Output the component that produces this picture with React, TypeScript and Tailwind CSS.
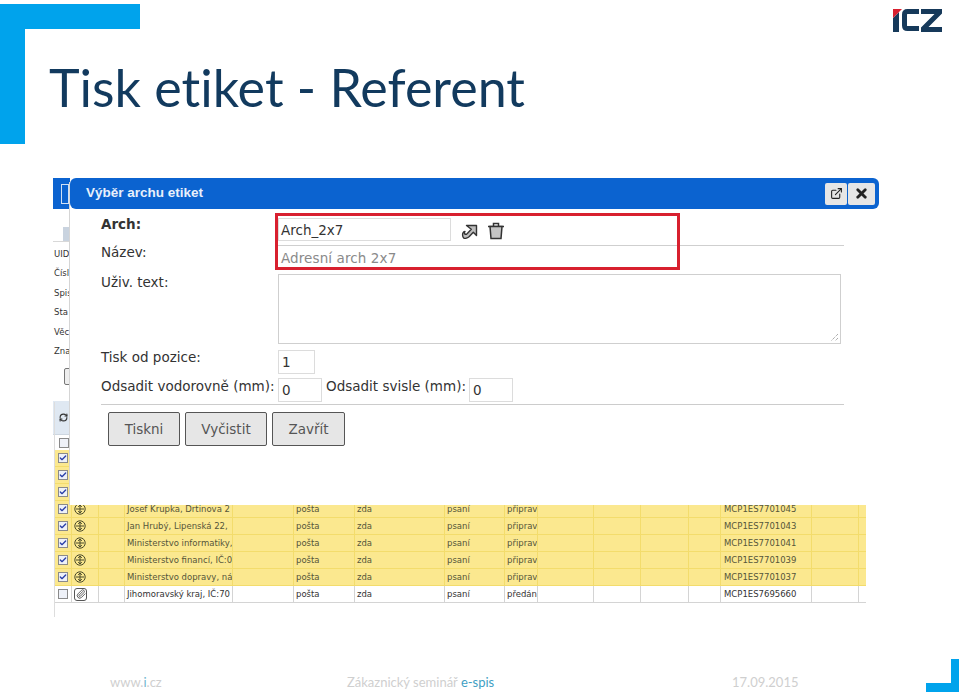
import { Check, ExternalLink, Paperclip, RefreshCw, X } from "lucide-react";

const ROWS = [
  { name: "", code: "MCP1ES7701051", state: "připrav", on: true },
  { name: "", code: "MCP1ES7701049", state: "připrav", on: true },
  { name: "", code: "MCP1ES7701047", state: "připrav", on: true },
  { name: "Josef Krupka, Drtinova 2", code: "MCP1ES7701045", state: "připrav", on: true },
  { name: "Jan Hrubý, Lipenská 22,", code: "MCP1ES7701043", state: "připrav", on: true },
  { name: "Ministerstvo informatiky,", code: "MCP1ES7701041", state: "připrav", on: true },
  { name: "Ministerstvo financí, IČ:0", code: "MCP1ES7701039", state: "připrav", on: true },
  { name: "Ministerstvo dopravy, ná", code: "MCP1ES7701037", state: "připrav", on: true },
  { name: "Jihomoravský kraj, IČ:70", code: "MCP1ES7695660", state: "předán", on: false },
];

const LEFT_LABELS = ["UID", "Čísl", "Spis", "Sta", "Věc", "Zna"];

function Checkbox({ on }: { on: boolean }) {
  return (
    <span className="flex h-[10px] w-[10px] items-center justify-center border border-[#8a8a8a] bg-[#eef1f8]">
      {on && <Check className="h-[8px] w-[8px] text-[#2a3fa8]" strokeWidth={4} />}
    </span>
  );
}

function SendIcon() {
  return (
    <svg viewBox="0 0 12 12" className="h-[12px] w-[12px]">
      <circle cx="6" cy="6" r="5.2" fill="none" stroke="#4a4a2a" strokeWidth="1" />
      <path d="M2 6h8M6 2v8M4.2 4l1.8-2 1.8 2M4.2 8l1.8 2 1.8-2" fill="none" stroke="#4a4a2a" strokeWidth="1" />
    </svg>
  );
}

function Cell({ children, className = "" }: { children?: React.ReactNode; className?: string }) {
  return <div className={`overflow-hidden whitespace-nowrap border-r pl-[2px] ${className}`}>{children}</div>;
}

function TableRow({ row }: { row: (typeof ROWS)[number] }) {
  const line = row.on ? "border-[#f3dc6c]" : "border-[#d4d4d4]";
  return (
    <div
      className={`grid h-[17px] grid-cols-[18px_27px_26px_108px_61px_61px_90px_60px_33px_56px_47px_48px_32px_91px_47px_7px] items-stretch border-b text-[8.5px] leading-[17px] ${line} ${
        row.on ? "bg-[#fbe88f] text-[#55553a]" : "bg-white text-[#333333]"
      }`}
    >
      <div className={`flex items-center justify-center border-r ${line}`}>
        <Checkbox on={row.on} />
      </div>
      <div className={`flex items-center border-r pl-[2px] ${line}`}>
        {row.on ? (
          <SendIcon />
        ) : (
          <span className="flex h-[13px] w-[13px] items-center justify-center rounded-[3px] border border-[#555555]">
            <Paperclip className="h-[10px] w-[10px] text-[#444444]" />
          </span>
        )}
      </div>
      <Cell className={line} />
      <Cell className={line}>{row.name}</Cell>
      <Cell className={line} />
      <Cell className={line}>pošta</Cell>
      <Cell className={line}>zda</Cell>
      <Cell className={line}>psaní</Cell>
      <Cell className={line}>{row.state}</Cell>
      <Cell className={line} />
      <Cell className={line} />
      <Cell className={line} />
      <Cell className={line} />
      <Cell className={`pl-[3px] ${line}`}>{row.code}</Cell>
      <Cell className={line} />
      <div />
    </div>
  );
}

function Field({ className = "", children }: { className?: string; children?: React.ReactNode }) {
  return (
    <div className={`flex items-center border border-[#dcdcdc] bg-white pl-[2px] text-[13.5px] text-[#333333] ${className}`}>
      {children}
    </div>
  );
}

function DialogButton({ label, className }: { label: string; className: string }) {
  return (
    <button className={`h-[34px] rounded-[2px] border border-[#555555] bg-[#e6e6e6] text-[13.5px] text-[#555555] ${className}`}>
      {label}
    </button>
  );
}

function Dialog() {
  return (
    <div className="absolute left-[17px] top-0 h-[327px] w-[814px] bg-white">
      <div className="absolute left-[-1px] top-[4px] h-[323px] w-px bg-[#d5d5d5]" />
      <div className="flex h-[31px] w-[809px] items-center rounded-[6px] bg-[#0b63d0] pl-[16px] pr-[4px]">
        <span className="flex-1 font-['Liberation_Sans',sans-serif] text-[13.5px] font-bold text-[#e8f0fb]">Výběr archu etiket</span>
        <button className="flex h-[22px] w-[22px] items-center justify-center rounded-[2px] bg-[#e6e6e6]">
          <ExternalLink className="h-[13px] w-[13px] text-[#222222]" strokeWidth={2} />
        </button>
        <button className="ml-px flex h-[22px] w-[27px] items-center justify-center rounded-[2px] bg-[#e6e6e6]">
          <X className="h-[15px] w-[15px] text-[#222222]" strokeWidth={4.5} />
        </button>
      </div>

      <div className="relative w-[774px] pl-[31px] text-[13.5px] leading-[16px] text-[#333333]">
        <div className="absolute left-[205px] top-[4px] h-[57px] w-[405px] border-[3px] border-[#d8202f]" />

        <div className="flex h-[36px] pt-[9px]">
          <span className="mt-[-2px] w-[177px] font-bold">Arch:</span>
          <Field className="h-[23px] w-[173px]">Arch_2x7</Field>
          <svg viewBox="0 0 18 18" className="ml-[9px] mt-[5px] h-[18px] w-[18px]">
            <path d="M6.5 2.5h10v10l-3.2-3.2-4 4.2c-1.4 1.4-4.4 2.6-5.6 1.4-1.3-1.3-1.7-4.5-.1-5.9L5 8.5c-.9.8-.6 2-.2 2.500.5.500 1.700.200 2.500-.600l4-4.200z" fill="#bdbdbd" stroke="#333333" strokeWidth="1.4" strokeLinejoin="round" />
          </svg>
          <svg viewBox="0 0 18 18" className="ml-[9px] mt-[3px] h-[20px] w-[18px]">
            <path d="M1 4.5h16M6.5 4V1.500h5V4" fill="none" stroke="#333333" strokeWidth="1.500" />
            <path d="M3 4.500l1 12h10l1-12z" fill="#c4c4c4" stroke="#333333" strokeWidth="1.500" />
          </svg>
        </div>

        <div className="flex h-[29px]">
          <span className="mt-[-1px] w-[177px]">Název:</span>
          <div className="flex h-[25px] w-[566px] items-center border-t border-[#cfcfcf] pl-[3px] text-[13.500px] tracking-[0.1px] text-[#8a8a8a]">
            Adresní arch 2x7
          </div>
        </div>

        <div className="flex h-[76px]">
          <span className="w-[177px]">Uživ. text:</span>
          <div className="relative h-[70px] w-[563px] border border-[#cfcfcf]">
            <svg viewBox="0 0 10 10" className="absolute bottom-[1px] right-[1px] h-[10px] w-[10px]">
              <path d="M9 2 2 9M9 6 6 9" stroke="#888888" strokeWidth="1" strokeDasharray="1 1" />
            </svg>
          </div>
        </div>

        <div className="flex h-[28px]">
          <span className="mt-[-1px] w-[177px]">Tisk od pozice:</span>
          <Field className="h-[24px] w-[37px] pl-[3px]">1</Field>
        </div>

        <div className="flex h-[26px]">
          <span className="w-[177px]">Odsadit vodorovně (mm):</span>
          <Field className="h-[24px] w-[44px] pl-[3px]">0</Field>
          <span className="ml-[4px] w-[143px]">Odsadit svisle (mm):</span>
          <Field className="h-[24px] w-[44px] pl-[3px]">0</Field>
        </div>

        <div className="h-px w-[743px] bg-[#cccccc]" />

        <div className="ml-[7px] mt-[7px] flex gap-[5px]">
          <DialogButton label="Tiskni" className="w-[72px]" />
          <DialogButton label="Vyčistit" className="w-[82px]" />
          <DialogButton label="Zavřít" className="w-[73px]" />
        </div>
      </div>
    </div>
  );
}

function AppScreenshot() {
  return (
    <div className="relative ml-[53px] mt-[34px] h-[439px] w-[831px] overflow-hidden font-['DejaVu_Sans',sans-serif]">
      <div className="flex h-[31px] items-center bg-[#0b63d0] pl-[8px]">
        <span className="h-[20px] w-[8px] border border-[#cfe0f5]" />
      </div>
      <div className="ml-[10px] mt-[18px] h-[14px] w-[10px] bg-[#c9d3df]" />
      <div className="h-px bg-[#d8d8d8]" />
      <div className="ml-px mt-[2px] text-[8.5px] text-[#333333]">
        {LEFT_LABELS.map((label) => (
          <div key={label} className="h-[19.4px] leading-[21px]">
            {label}
          </div>
        ))}
      </div>
      <div className="ml-[11px] mt-[8px] h-[17px] w-[10px] rounded-[2px] border border-[#777777] bg-[#eeeeee]" />
      <div className="mt-[16px] flex h-[34px] items-center border-b border-[#cdd6e0] bg-[#dfe8f2] pl-[6px]">
        <RefreshCw className="h-[9px] w-[9px] text-[#333333]" strokeWidth={3} />
      </div>
      <div className="flex h-[15px] items-center pl-[6px]">
        <Checkbox on={false} />
      </div>
      <div className="ml-px w-[812px]">
        {ROWS.map((row) => (
          <TableRow key={row.code} row={row} />
        ))}
      </div>
      <div className="absolute bottom-0 left-px top-[224px] w-px bg-[#dddddd]" />
      <Dialog />
    </div>
  );
}

function Logo() {
  return (
    <svg viewBox="0 0 49 24" className="h-[24px] w-[49px]">
      <path d="M0 10 6 4v20H0z" fill="#16395a" />
      <path d="M0 10V1h9z" fill="#d8202f" />
      <path d="M26 3.500H14.500c-2 0-3 1-3 3v11c0 2 1 3 3 3H26" fill="none" stroke="#16395a" strokeWidth="5" />
      <path d="M28 1h21v4.500L35.500 19H49v5H28v-4.500L41.500 6H28z" fill="#16395a" />
    </svg>
  );
}

export default function App() {
  return (
    <div className="flex h-[694px] w-[960px] flex-col overflow-hidden bg-white font-['Lato',sans-serif]">
      <div className="relative pt-[4px]">
        <div className="h-[25px] w-[140px] bg-[#00a3ec]" />
        <div className="flex">
          <div className="h-[115px] w-[25px] bg-[#00a3ec]" />
          <h1 className="ml-[24px] mt-[25px] text-[52px] leading-[66px] text-[#123a5e] [font-variant-ligatures:none]">Tisk etiket - Referent</h1>
        </div>
        <div className="absolute right-[18px] top-[8px]">
          <Logo />
        </div>
      </div>

      <AppScreenshot />

      <div className="flex flex-1 items-end justify-between pb-[2px]">
        <div className="flex text-[13px] leading-[20px] text-[#cfcfcf]">
          <span className="ml-[110px] w-[237px]">
            www.<span className="text-[#6fb6cf]">i</span>.cz
          </span>
          <span className="w-[385px]">
            Zákaznický seminář <span className="text-[#3f9fc4]">e-spis</span>
          </span>
          <span>17.09.2015</span>
        </div>
        <div className="mr-px flex flex-col items-end">
          <div className="h-[24px] w-[8px] bg-[#00a3ec]" />
          <div className="h-[9px] w-[33px] bg-[#00a3ec]" />
        </div>
      </div>
    </div>
  );
}
